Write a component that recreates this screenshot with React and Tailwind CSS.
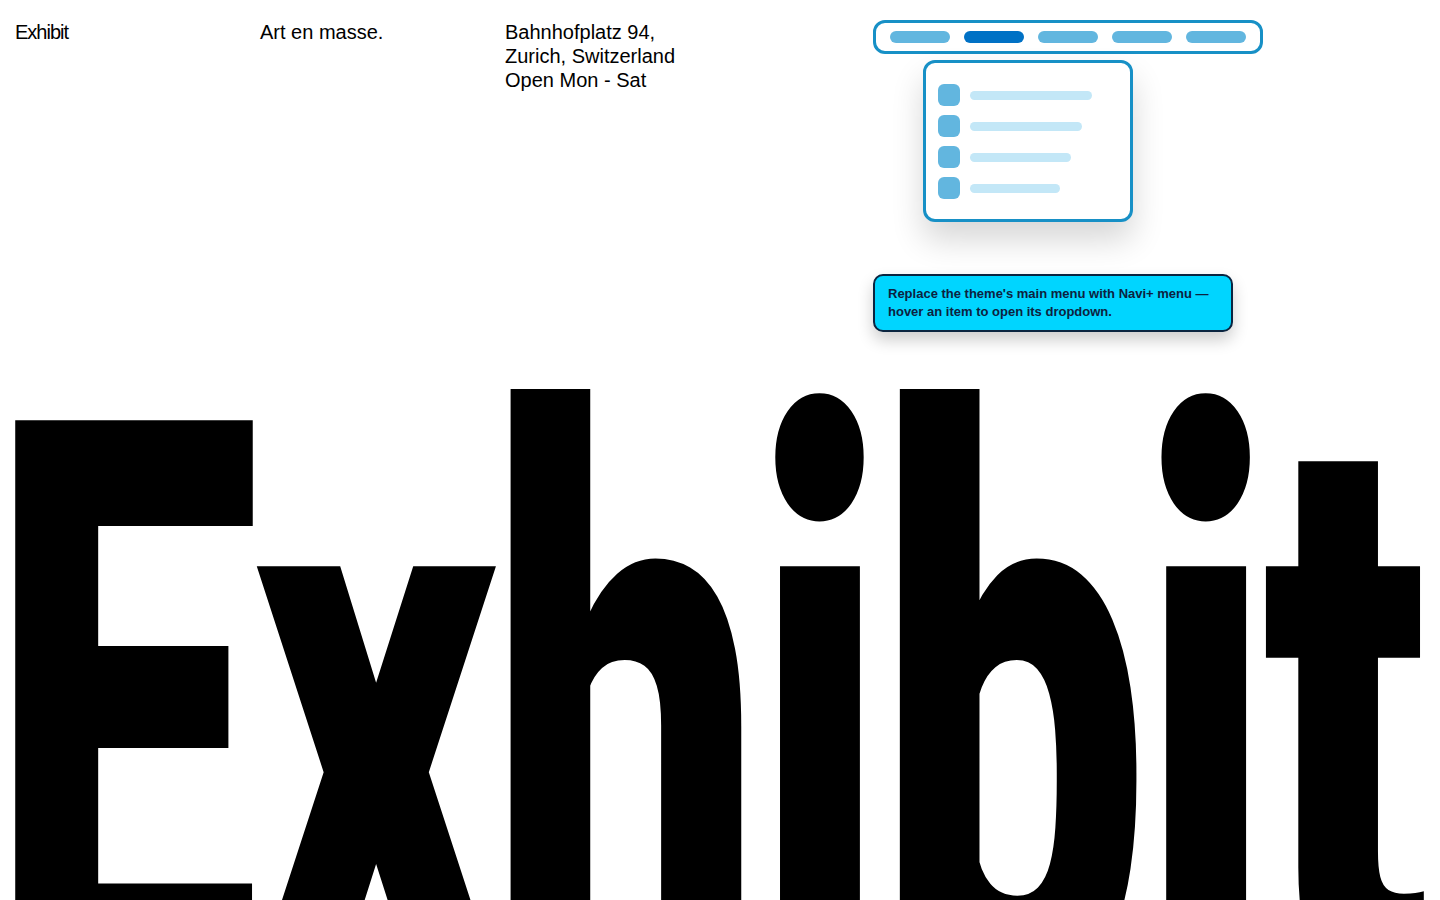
const pills = [false, true, false, false, false];
const rows = [122, 112, 101, 90];

const NaviPreview = () => (
	<div className="absolute left-[873px] top-[20px] w-[390px]">
		<div className="h-[34px] border-[3px] border-[#1790c6] rounded-[12px] bg-white flex items-center gap-[14px] px-[14px]">
			{pills.map((on, i) => (
				<div
					key={i}
					className={`h-[12px] w-[60px] rounded-full ${on ? "bg-[#0071c5]" : "bg-[#62b6df]"}`}
				/>
			))}
		</div>
		<div className="ml-[50px] mt-[6px] w-[210px] h-[162px] border-[3px] border-[#1790c6] rounded-[12px] bg-white shadow-[0_18px_32px_rgba(0,0,0,0.16)] pt-[21px] pl-[12px] flex flex-col gap-[9px]">
			{rows.map((w, i) => (
				<div key={i} className="flex items-center gap-[10px]">
					<div className="w-[22px] h-[22px] rounded-[6px] bg-[#62b6df]" />
					<div className="h-[9px] rounded-full bg-[#c3e7f7]" style={{ width: w }} />
				</div>
			))}
		</div>
		<div className="mt-[52px] w-[360px] border-2 border-[#0b2540] rounded-[10px] bg-[#00d5ff] px-[13px] py-[9px] shadow-[0_8px_16px_rgba(0,0,0,0.2)] text-[13px] leading-[18px] font-bold text-[#0d2240] font-['Liberation_Sans',Arial,sans-serif]">
			Replace the theme's main menu with Navi+ menu —
			<br />
			hover an item to open its dropdown.
		</div>
	</div>
);

export default function App() {
	return (
		<div className="relative h-[900px] overflow-hidden bg-white text-black font-['Liberation_Sans',Arial,sans-serif]">
			<header className="flex pt-[20px] px-[15px] text-[20px] leading-[24px]">
				<div className="w-[245px] tracking-[-0.05em]">Exhibit</div>
				<div className="w-[245px]">Art en masse.</div>
				<div className="w-[245px]">
					Bahnhofplatz 94,
					<br />
					Zurich, Switzerland
					<br />
					Open Mon - Sat
				</div>
			</header>

			<h1 className="mt-[224px] ml-[-11px] whitespace-nowrap">
				<span className="inline-block origin-left scale-x-[0.605] font-['Roboto',sans-serif] font-black text-[800px] leading-none tracking-[-0.02em]">
					Exhibit
				</span>
			</h1>

			<NaviPreview />
		</div>
	);
}
